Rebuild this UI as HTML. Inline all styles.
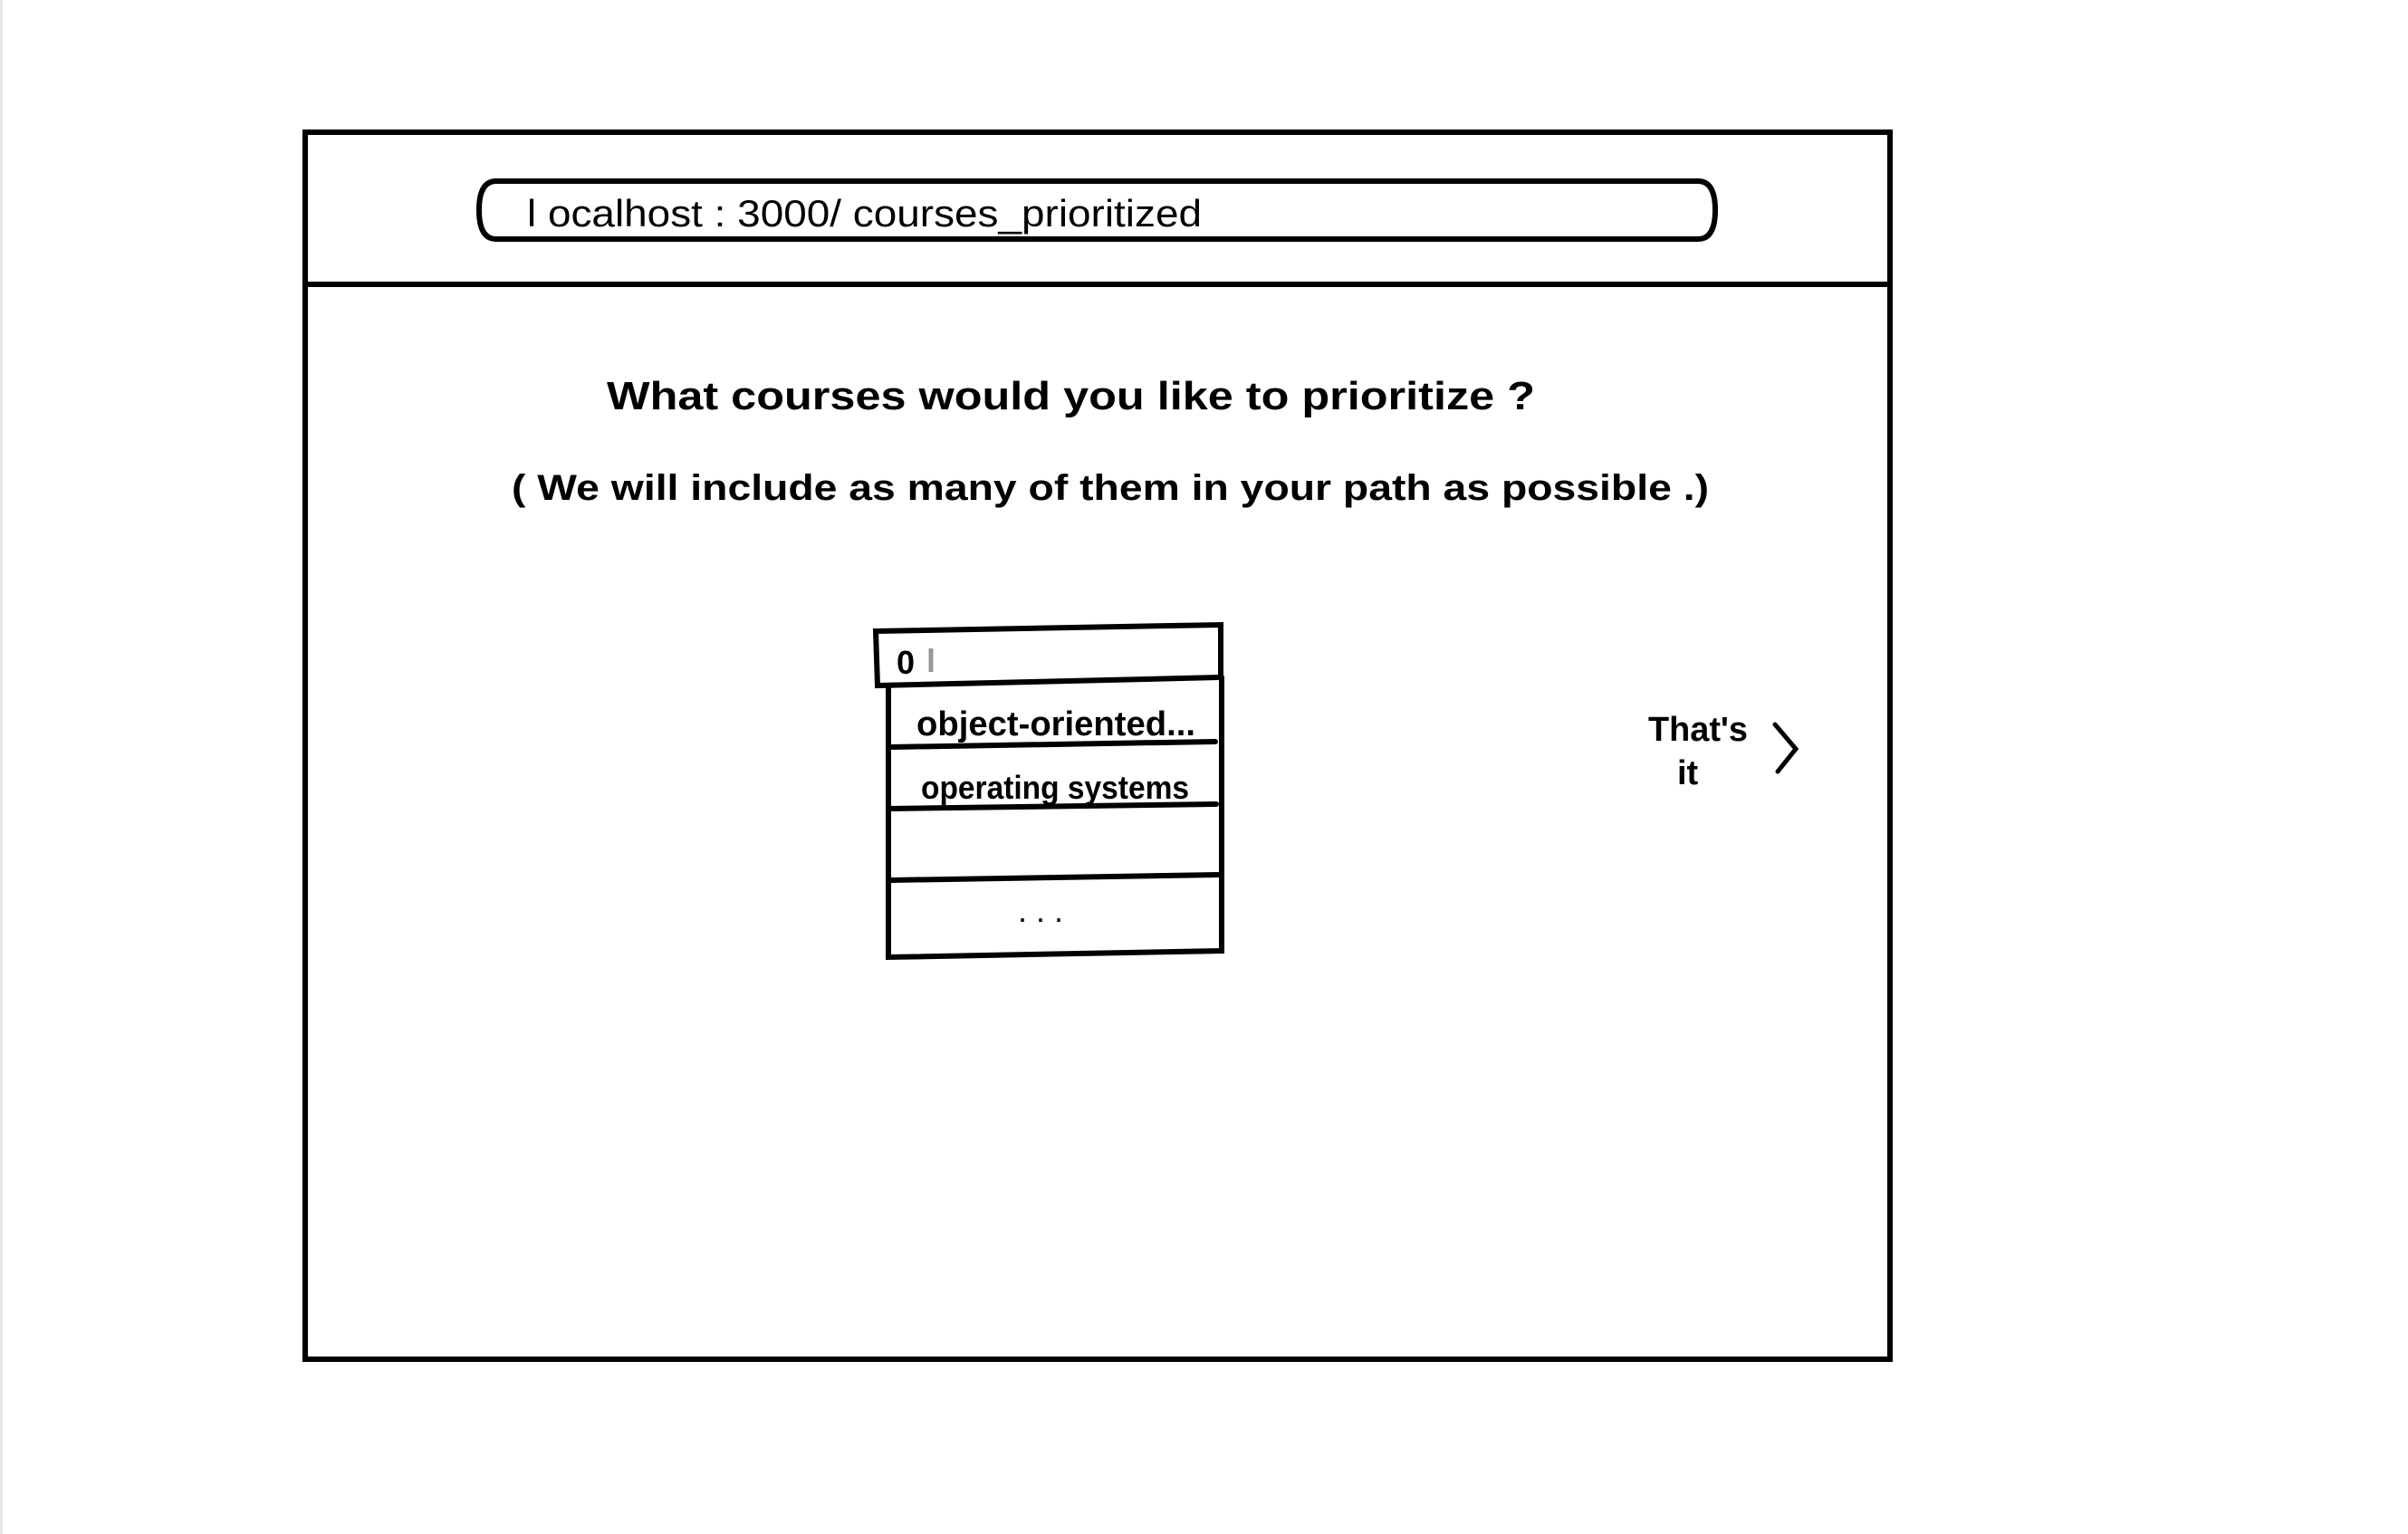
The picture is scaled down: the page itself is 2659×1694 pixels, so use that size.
<!DOCTYPE html>
<html><head><meta charset="utf-8"><style>
html,body{margin:0;padding:0;background:#fff;width:2659px;height:1694px;overflow:hidden}
svg{display:block}
text{font-family:"Liberation Sans",sans-serif;fill:#000}
</style></head><body>
<svg width="2659" height="1694" viewBox="0 0 2659 1694" xmlns="http://www.w3.org/2000/svg">
<rect x="0" y="0" width="3" height="1694" fill="#e6e6ea"/>
<g fill="none" stroke="#000" stroke-width="6" stroke-linecap="round">
<rect x="337" y="146" width="1750" height="1355"/>
<line x1="337" y1="314" x2="2087" y2="314"/>
<path d="M548 200 H1875 Q1894 200 1894 232 Q1894 264 1875 264 H548 Q529 264 529 232 Q529 200 548 200 Z"/>
<path d="M967 697 L1348 690 L1348 748 L969 757 Z"/>
<path d="M981 757 L981 1057 L1349 1050 L1349 748"/>
<line x1="983" y1="825" x2="1342" y2="819"/>
<line x1="983" y1="893" x2="1343" y2="888"/>
<line x1="983" y1="972" x2="1345" y2="966"/>
<path d="M1960 800 L1983 827 L1963 852" stroke-width="5"/>
</g>
<line x1="1028" y1="716" x2="1028" y2="742" stroke="#999" stroke-width="5"/>
<text x="582" y="250" font-size="42" textLength="745" lengthAdjust="spacingAndGlyphs">l ocalhost : 3000/ courses_prioritized</text>
<text x="670" y="452" font-size="44" font-weight="bold" textLength="1025" lengthAdjust="spacingAndGlyphs">What courses would you like to prioritize ?</text>
<text x="565" y="552" font-size="40" font-weight="bold" textLength="1322" lengthAdjust="spacingAndGlyphs">( We will include as many of them in your path as possible .)</text>
<text x="990" y="744" font-size="36" font-weight="bold">0</text>
<text x="1012" y="812" font-size="38" font-weight="bold" textLength="308" lengthAdjust="spacingAndGlyphs">object-oriented...</text>
<text x="1017" y="882" font-size="36" font-weight="bold" textLength="296" lengthAdjust="spacingAndGlyphs">operating systems</text>
<text x="1124" y="1018" font-size="36">. . .</text>
<text x="1820" y="818" font-size="38" font-weight="bold" textLength="110" lengthAdjust="spacingAndGlyphs">That's</text>
<text x="1852" y="866" font-size="38" font-weight="bold">it</text>
</svg>
</body></html>
